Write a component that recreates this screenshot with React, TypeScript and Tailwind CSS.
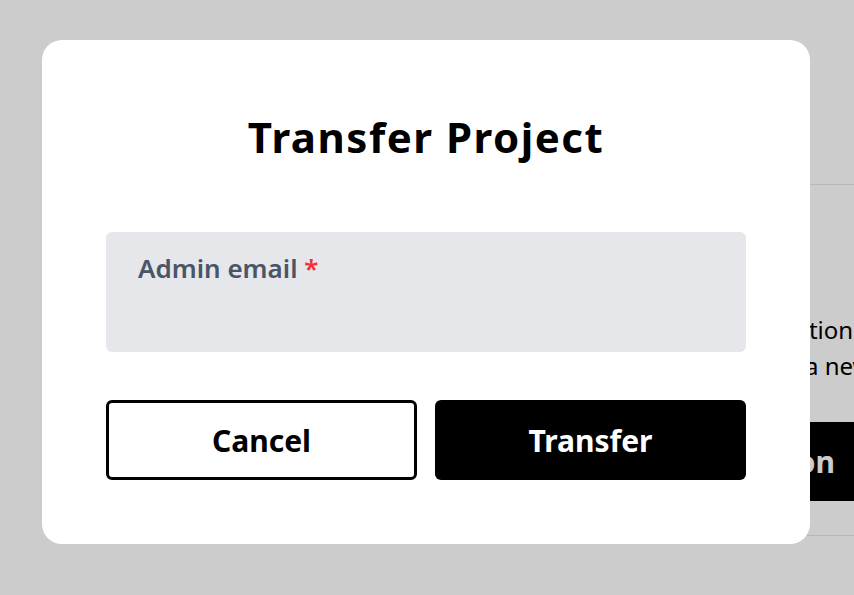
import React from 'react';

const font = { fontFamily: '"Noto Sans", "Open Sans", sans-serif' };

export default function App() {
  return (
    <div className="relative h-[595px] w-full overflow-hidden bg-white text-black" style={font}>
      {/* page behind the dialog */}
      <div className="pt-[184px]">
        <section className="ml-[330px] flex h-[352px] w-[533px] flex-col border-y border-gray-200 pt-[127px]">
          <p className="whitespace-nowrap text-[24px] leading-[36px]">Hand this project over to another organization</p>
          <p className="whitespace-nowrap text-[24px] leading-[36px]">and all of its members, or you can choose a new owner for it.</p>
          <button className="mt-[38px] h-[79px] self-end whitespace-nowrap bg-black px-7 text-[30px] font-bold text-white">
            Transfer to Organization
          </button>
        </section>
      </div>

      <div className="absolute inset-0 bg-black/20" />

      {/* dialog */}
      <div className="absolute left-[42px] top-[40px] w-[768px] rounded-[20px] bg-white px-16 pb-16 pt-[77px]">
        <h2 className="text-center text-[42px] font-bold leading-[40px] tracking-[1.5px]">Transfer Project</h2>

        <div className="mt-[75px] h-[120px] rounded-md bg-gray-200 px-8 pt-[17px]">
          <label className="text-[26px] font-semibold text-gray-600">
            Admin email <span className="text-red-500">*</span>
          </label>
        </div>

        <div className="mt-12 grid grid-cols-2 gap-[18px]">
          <button className="h-20 rounded-md border-[3px] border-black bg-white text-[30px] font-bold">Cancel</button>
          <button className="h-20 rounded-md bg-black text-[30px] font-bold text-white">Transfer</button>
        </div>
      </div>
    </div>
  );
}
